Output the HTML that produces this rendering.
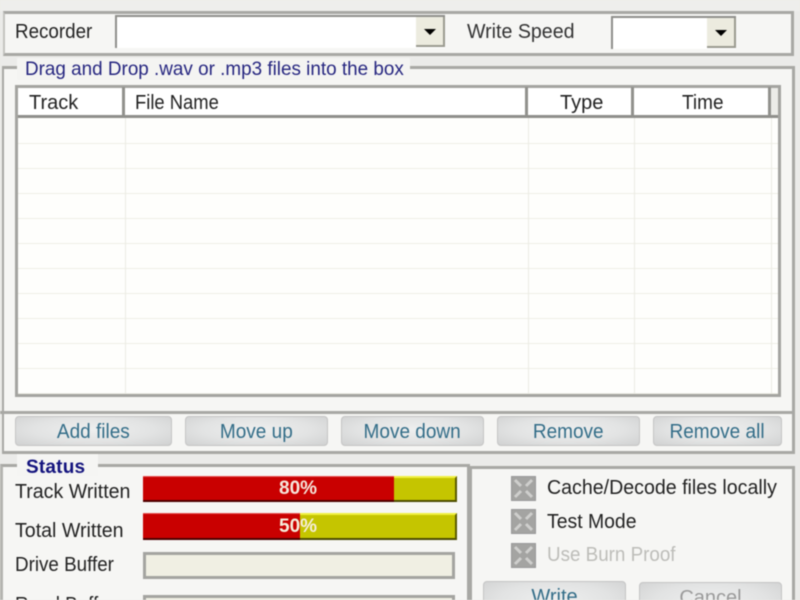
<!DOCTYPE html>
<html><head><meta charset="utf-8">
<style>
html,body{margin:0;padding:0;background:#e9e9e7;}
#w{position:relative;width:800px;height:600px;overflow:hidden;background:#ebebe9;font-family:"Liberation Sans",sans-serif;font-size:20px;color:#222;filter:blur(.6px);}
.a{position:absolute;box-sizing:border-box;}
.t{position:absolute;white-space:nowrap;line-height:24px;height:24px;transform-origin:0 50%;}
.panel{background:#f6f6f4;}
.h{position:absolute;background:#a0a09c;}
.btn{position:absolute;box-sizing:border-box;height:30px;top:416px;background:radial-gradient(ellipse at 50% 45%,#eeefef 0,#e2e3e3 55%,#d0d1d1 100%);border:1px solid #c4c4c4;border-radius:4px;color:#336d88;text-align:center;line-height:30px;font-size:20px;}
.btn span{display:inline-block;transform:scaleX(.95);}
.rl{position:absolute;left:18px;width:760px;height:1px;background:#eeeee6;}
.vl{position:absolute;top:118px;height:276px;width:1px;background:#ecece4;}
.cb{position:absolute;left:511px;width:25px;height:25px;background:#a4a4a2;border:1px solid #999;box-sizing:border-box;}
.arrow{position:absolute;width:0;height:0;border-left:6px solid transparent;border-right:6px solid transparent;border-top:6px solid #000;}
</style></head><body>
<div id="w">
<div class="a" style="left:0;top:0;width:800px;height:11px;background:#eeeeec"></div>
<div class="a panel" style="left:3px;top:11px;width:791px;height:45px;border:3px solid #a8a8a4;border-left:2px solid #c4c4c0"></div>
<div class="t" style="left:15px;top:20px;transform:scaleX(.94)">Recorder</div>

<div class="a" style="left:115px;top:15px;width:330px;height:33px;background:#fff;border-left:2px solid #8f8f8b;border-top:2px solid #8f8f8b"></div>
<div class="a" style="left:416px;top:17px;width:29px;height:30px;background:#ecebdf;border-right:2px solid #9a9a90;border-bottom:2px solid #9a9a90"></div>
<div class="arrow" style="left:424px;top:29px"></div>
<div class="t" style="left:467px;top:20px;color:#333;transform:scaleX(.98)">Write Speed</div>
<div class="a" style="left:611px;top:16px;width:125px;height:33px;background:#fff;border:2px solid #8f8f8b;border-right:none;border-bottom:none"></div>
<div class="a" style="left:707px;top:18px;width:29px;height:30px;background:#ecebdf;border-right:2px solid #9a9a90;border-bottom:2px solid #9a9a90"></div>
<div class="arrow" style="left:715px;top:30px"></div>

<div class="a panel" style="left:2px;top:66px;width:793px;height:388px;border:3px solid #a8a8a4;border-left-width:2px"></div>
<div class="a" style="left:0;top:411px;width:795px;height:3px;background:#a8a8a4"></div>
<div class="a" style="left:17px;top:58px;width:393px;height:22px;background:#f4f4f2"></div>
<div class="t" style="left:25px;top:57px;color:#262680;font-size:19.5px;transform:scaleX(.968)">Drag and Drop .wav or .mp3 files into the box</div>

<div class="a" style="left:15px;top:85px;width:766px;height:312px;background:#fefefc;border:3px solid #a4a4a0"></div>
<div class="a" style="left:18px;top:88px;width:760px;height:27px;background:#fff"></div>
<div class="h" style="left:18px;top:115px;width:760px;height:3px;background:#8f8f8b"></div>
<div class="h" style="left:122px;top:87px;width:3px;height:29px;background:#91918d"></div>
<div class="h" style="left:525px;top:87px;width:3px;height:29px;background:#91918d"></div>
<div class="h" style="left:631px;top:87px;width:3px;height:29px;background:#91918d"></div>
<div class="h" style="left:768px;top:87px;width:3px;height:29px;background:#91918d"></div>
<div class="a" style="left:771px;top:88px;width:7px;height:27px;background:#ecece8"></div>
<div class="t" style="left:29px;top:91px">Track</div>
<div class="t" style="left:135px;top:91px;transform:scaleX(.92)">File Name</div>
<div class="t" style="left:560px;top:91px">Type</div>
<div class="t" style="left:682px;top:91px;transform:scaleX(.95)">Time</div>

<div class="rl" style="top:143px"></div><div class="rl" style="top:168px"></div>
<div class="rl" style="top:193px"></div><div class="rl" style="top:218px"></div>
<div class="rl" style="top:243px"></div><div class="rl" style="top:268px"></div>
<div class="rl" style="top:293px"></div><div class="rl" style="top:318px"></div>
<div class="rl" style="top:343px"></div><div class="rl" style="top:368px"></div>
<div class="rl" style="top:393px"></div>
<div class="vl" style="left:125px"></div><div class="vl" style="left:528px"></div>
<div class="vl" style="left:634px"></div><div class="vl" style="left:771px"></div>

<div class="btn" style="left:15px;width:157px"><span>Add files</span></div>
<div class="btn" style="left:185px;width:143px"><span>Move up</span></div>
<div class="btn" style="left:341px;width:143px"><span>Move down</span></div>
<div class="btn" style="left:497px;width:143px"><span>Remove</span></div>
<div class="btn" style="left:653px;width:129px"><span>Remove all</span></div>

<div class="a" style="left:0;top:454px;width:800px;height:10px;background:#ebebe9"></div>
<div class="a panel" style="left:0;top:464px;width:470px;height:140px;border-top:3px solid #a8a8a4;border-left:3px solid #b4b4b0"></div>
<div class="a panel" style="left:467px;top:466px;width:328px;height:140px;border-top:3px solid #a8a8a4;border-left:5px solid #a8a8a4;border-right:3px solid #a8a8a4"></div>
<div class="a" style="left:17px;top:454px;width:81px;height:22px;background:#f5f5f3"></div>
<div class="t" style="left:26px;top:456px;color:#14147e;font-weight:bold;font-size:19px;letter-spacing:.2px">Status</div>

<div class="t" style="left:15px;top:480px;transform:scaleX(.98)">Track Written</div>
<div class="t" style="left:15px;top:519px;transform:scaleX(.98)">Total Written</div>
<div class="t" style="left:15px;top:553px;transform:scaleX(.94)">Drive Buffer</div>
<div class="t" style="left:15px;top:593px;transform:scaleX(.94)">Read Buffer</div>

<div class="a" style="left:143px;top:476px;width:314px;height:26px;background:#c5c500;border-top:2px solid #f0f040;border-bottom:2px solid #4a4a00;border-right:2px solid #5a5a00"></div>
<div class="a" style="left:143px;top:476px;width:251px;height:26px;background:#c90000;border-top:1px solid #e85050;border-bottom:2px solid #4d0000"></div>
<div class="t" style="left:279px;top:477px;color:#f6e6dc;font-weight:bold;font-size:19px">80%</div>

<div class="a" style="left:143px;top:513px;width:314px;height:27px;background:#c5c500;border-top:2px solid #f0f040;border-bottom:2px solid #4a4a00;border-right:2px solid #5a5a00"></div>
<div class="a" style="left:143px;top:513px;width:157px;height:27px;background:#c90000;border-top:1px solid #e85050;border-bottom:2px solid #4d0000"></div>
<div class="t" style="left:279px;top:515px;color:#f6eedc;font-weight:bold;font-size:19px">50%</div>

<div class="a" style="left:143px;top:552px;width:312px;height:27px;background:#f0efe3;border:3px solid #a4a4a0"></div>
<div class="a" style="left:143px;top:595px;width:312px;height:27px;background:#f0efe3;border:3px solid #a4a4a0"></div>

<div class="cb" style="top:476px"><svg width="23" height="23" viewBox="0 0 23 23"><path d="M3 3L9 9M20 3L14 9M3 20L9 14M20 20L14 14" stroke="#cfcfcd" stroke-width="3" fill="none"/></svg></div>
<div class="cb" style="top:509px"><svg width="23" height="23" viewBox="0 0 23 23"><path d="M3 3L9 9M20 3L14 9M3 20L9 14M20 20L14 14" stroke="#cfcfcd" stroke-width="3" fill="none"/></svg></div>
<div class="cb" style="top:543px"><svg width="23" height="23" viewBox="0 0 23 23"><path d="M3 3L9 9M20 3L14 9M3 20L9 14M20 20L14 14" stroke="#cfcfcd" stroke-width="3" fill="none"/></svg></div>
<div class="t" style="left:547px;top:476px;transform:scaleX(.98)">Cache/Decode files locally</div>
<div class="t" style="left:547px;top:510px;transform:scaleX(.97)">Test Mode</div>
<div class="t" style="left:547px;top:543px;color:#bdbdb9;transform:scaleX(.94)">Use Burn Proof</div>

<div class="btn" style="left:483px;top:581px;width:143px;height:40px">Write</div>
<div class="btn" style="left:639px;top:582px;width:143px;height:40px;color:#9a9a9a">Cancel</div>
</div>
</body></html>
